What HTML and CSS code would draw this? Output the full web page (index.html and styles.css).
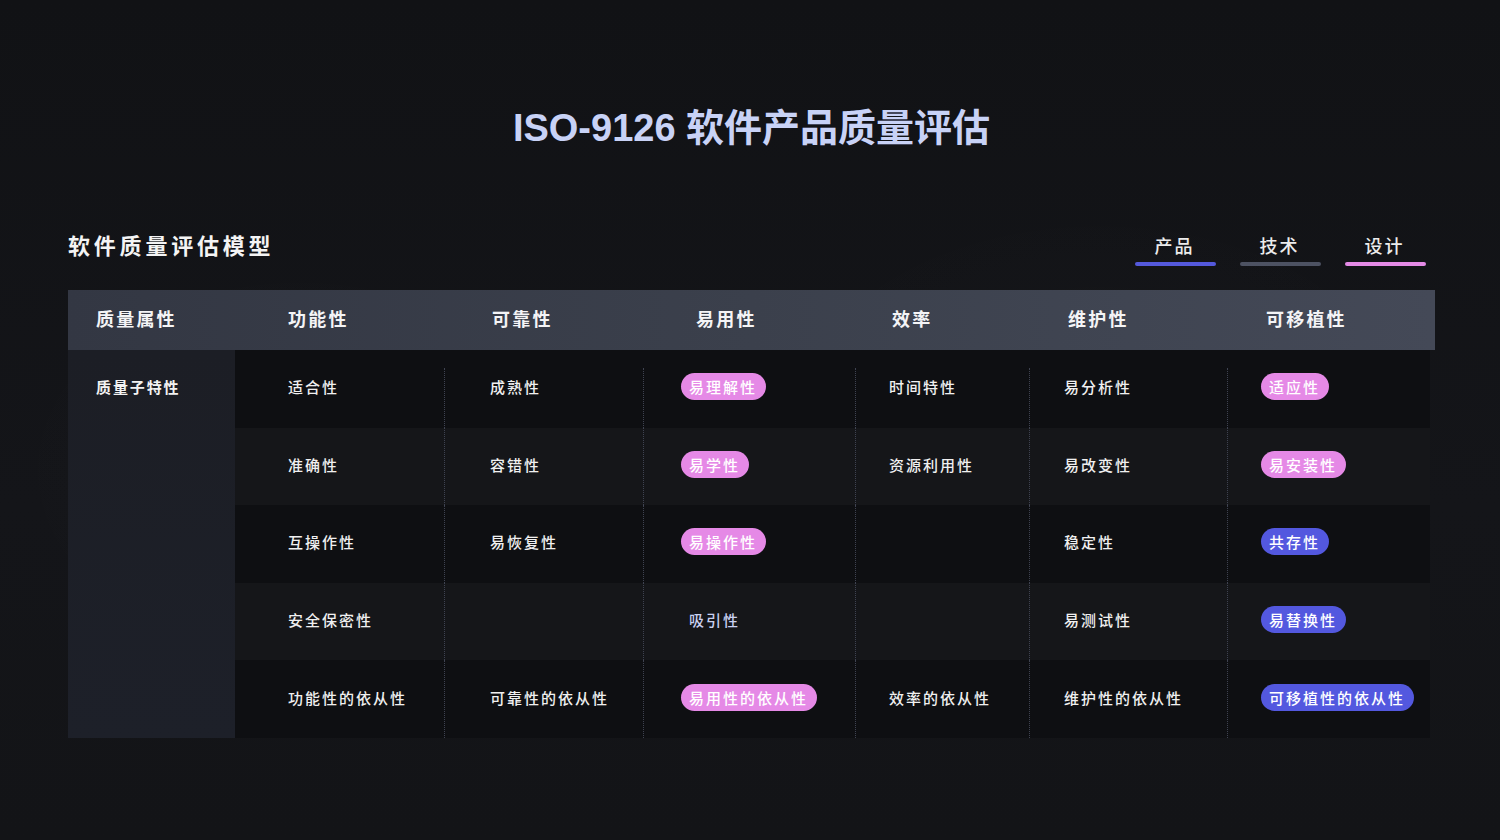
FILE: index.html
```html
<!DOCTYPE html>
<html lang="zh-CN">
<head>
<meta charset="utf-8">
<title>ISO-9126 软件产品质量评估</title>
<link rel="stylesheet" href="styles.css">
</head>
<body>
<div class="page">
  <h1 class="title">ISO-9126 软件产品质量评估</h1>

  <div class="toolbar">
    <h2 class="section-title">软件质量评估模型</h2>
    <div class="tabs">
      <div class="tab tab-product"><span>产品</span><i class="bar"></i></div>
      <div class="tab tab-tech"><span>技术</span><i class="bar"></i></div>
      <div class="tab tab-design"><span>设计</span><i class="bar"></i></div>
    </div>
  </div>

  <div class="table">
    <div class="thead">
      <div class="th">质量属性</div>
      <div class="th">功能性</div>
      <div class="th">可靠性</div>
      <div class="th">易用性</div>
      <div class="th">效率</div>
      <div class="th">维护性</div>
      <div class="th">可移植性</div>
    </div>
    <div class="tbody">
      <div class="side"><div class="side-label">质量子特性</div></div>
      <div class="rows">
        <div class="row">
          <div class="cell">适合性</div>
          <div class="cell">成熟性</div>
          <div class="cell"><span class="pill pink">易理解性</span></div>
          <div class="cell">时间特性</div>
          <div class="cell">易分析性</div>
          <div class="cell"><span class="pill pink">适应性</span></div>
        </div>
        <div class="row">
          <div class="cell">准确性</div>
          <div class="cell">容错性</div>
          <div class="cell"><span class="pill pink">易学性</span></div>
          <div class="cell">资源利用性</div>
          <div class="cell">易改变性</div>
          <div class="cell"><span class="pill pink">易安装性</span></div>
        </div>
        <div class="row">
          <div class="cell">互操作性</div>
          <div class="cell">易恢复性</div>
          <div class="cell"><span class="pill pink">易操作性</span></div>
          <div class="cell"></div>
          <div class="cell">稳定性</div>
          <div class="cell"><span class="pill blue">共存性</span></div>
        </div>
        <div class="row">
          <div class="cell">安全保密性</div>
          <div class="cell"></div>
          <div class="cell"><span class="pill plain">吸引性</span></div>
          <div class="cell"></div>
          <div class="cell">易测试性</div>
          <div class="cell"><span class="pill blue">易替换性</span></div>
        </div>
        <div class="row">
          <div class="cell">功能性的依从性</div>
          <div class="cell">可靠性的依从性</div>
          <div class="cell"><span class="pill pink">易用性的依从性</span></div>
          <div class="cell">效率的依从性</div>
          <div class="cell">维护性的依从性</div>
          <div class="cell"><span class="pill blue">可移植性的依从性</span></div>
        </div>
      </div>
    </div>
  </div>
</div>
</body>
</html>
```

FILE: styles.css
```css
html, body {
  margin: 0;
  padding: 0;
}

body {
  width: 1500px;
  height: 840px;
  overflow: hidden;
  background-color: #131417;
  background-image:
    radial-gradient(ellipse 420px 300px at 300px 470px, rgba(255,255,255,0.018), rgba(255,255,255,0) 70%),
    radial-gradient(ellipse 500px 320px at 1100px 420px, rgba(255,255,255,0.015), rgba(255,255,255,0) 70%),
    linear-gradient(180deg, #111215 0%, #141519 60%, #131417 100%);
  font-family: "Liberation Sans", "Noto Sans CJK SC", sans-serif;
  color: #eeeeee;
}

.page {
  padding: 105px 65px 0 68px;
}

.title {
  margin: 0;
  text-align: center;
  font-size: 38px;
  line-height: 46px;
  font-weight: 700;
  color: #c8d2f6;
  letter-spacing: 0;
}

.toolbar {
  margin-top: 81px;
  display: flex;
  justify-content: space-between;
  align-items: flex-start;
}

.section-title {
  margin: 0;
  font-size: 22px;
  line-height: 30px;
  font-weight: 700;
  letter-spacing: 3.8px;
  color: #f4f4f4;
}

.tabs {
  display: flex;
  gap: 24px;
  margin-right: 9px;
  padding-top: 1px;
}

.tab {
  width: 81px;
  display: flex;
  flex-direction: column;
  align-items: center;
}

.tab span {
  font-family: "Noto Sans CJK SC", sans-serif;
  font-size: 18px;
  line-height: 24px;
  letter-spacing: 2px;
  padding-right: 2px;
  font-weight: 500;
  color: #ececec;
}

.tab .bar {
  display: block;
  width: 81px;
  height: 4px;
  border-radius: 2px;
  margin-top: 5px;
}

.tab-product .bar { background: #5459dc; }
.tab-tech .bar { background: #4d5262; }
.tab-design .bar { background: #e48ae6; }

.table {
  margin-top: 24px;
}

.thead {
  display: grid;
  grid-template-columns: 167px 209px 199px 212px 174px 198px 208px;
  height: 60px;
  background: linear-gradient(90deg, #333743 0%, #3b404c 50%, #444957 100%);
}

.th {
  display: flex;
  align-items: center;
  padding-bottom: 4px;
  font-size: 18px;
  font-weight: 700;
  letter-spacing: 2.2px;
  color: #f4f4f6;
  font-family: "Noto Sans CJK SC", sans-serif;
}

.th:nth-child(1) { padding-left: 28px; }
.th:nth-child(2) { padding-left: 53px; }
.th:nth-child(3) { padding-left: 48px; }
.th:nth-child(4) { padding-left: 53px; }
.th:nth-child(5) { padding-left: 37px; }
.th:nth-child(6) { padding-left: 39px; }
.th:nth-child(7) { padding-left: 39px; }

.tbody {
  display: flex;
  width: 1362px;
}

.side {
  width: 167px;
  flex: none;
  background: linear-gradient(180deg, #1c1e25 0%, #1d2029 100%);
}

.side-label {
  height: 77.6px;
  box-sizing: border-box;
  display: flex;
  align-items: center;
  padding-left: 28px;
  padding-bottom: 4px;
  font-family: "Noto Sans CJK SC", sans-serif;
  font-size: 15px;
  font-weight: 700;
  letter-spacing: 1.9px;
  color: #f2f2f2;
}

.rows {
  flex: 1;
  display: flex;
  flex-direction: column;
}

.row {
  display: grid;
  grid-template-columns: 209px 199px 212px 174px 198px 203px;
  height: 77.6px;
  background: #0e0f12;
}

.row:nth-child(even) {
  background: #151619;
}

.cell {
  position: relative;
  display: flex;
  align-items: center;
  padding-bottom: 4px;
  font-family: "Noto Sans CJK SC", sans-serif;
  font-size: 15px;
  font-weight: 500;
  letter-spacing: 2px;
  color: #f0f0f0;
  white-space: nowrap;
}

.cell + .cell::before {
  content: "";
  position: absolute;
  left: 0;
  top: 0;
  bottom: 0;
  border-left: 1px dotted #3f4351;
}

.row:first-child .cell + .cell::before {
  top: 18px;
}

.cell:nth-child(1) { padding-left: 53px; }
.cell:nth-child(2) { padding-left: 46px; }
.cell:nth-child(3) { padding-left: 38px; }
.cell:nth-child(4) { padding-left: 34px; }
.cell:nth-child(5) { padding-left: 35px; }
.cell:nth-child(6) { padding-left: 34px; }

.pill {
  display: inline-flex;
  align-items: center;
  height: 27px;
  padding: 0 9px 0 8px;
  border-radius: 14px;
  color: #ffffff;
  line-height: 27px;
}

.pill.pink { background: #e589e6; }
.pill.blue { background: #5358df; }
.pill.plain {
  background: transparent;
  color: #c9d1f1;
}
```
